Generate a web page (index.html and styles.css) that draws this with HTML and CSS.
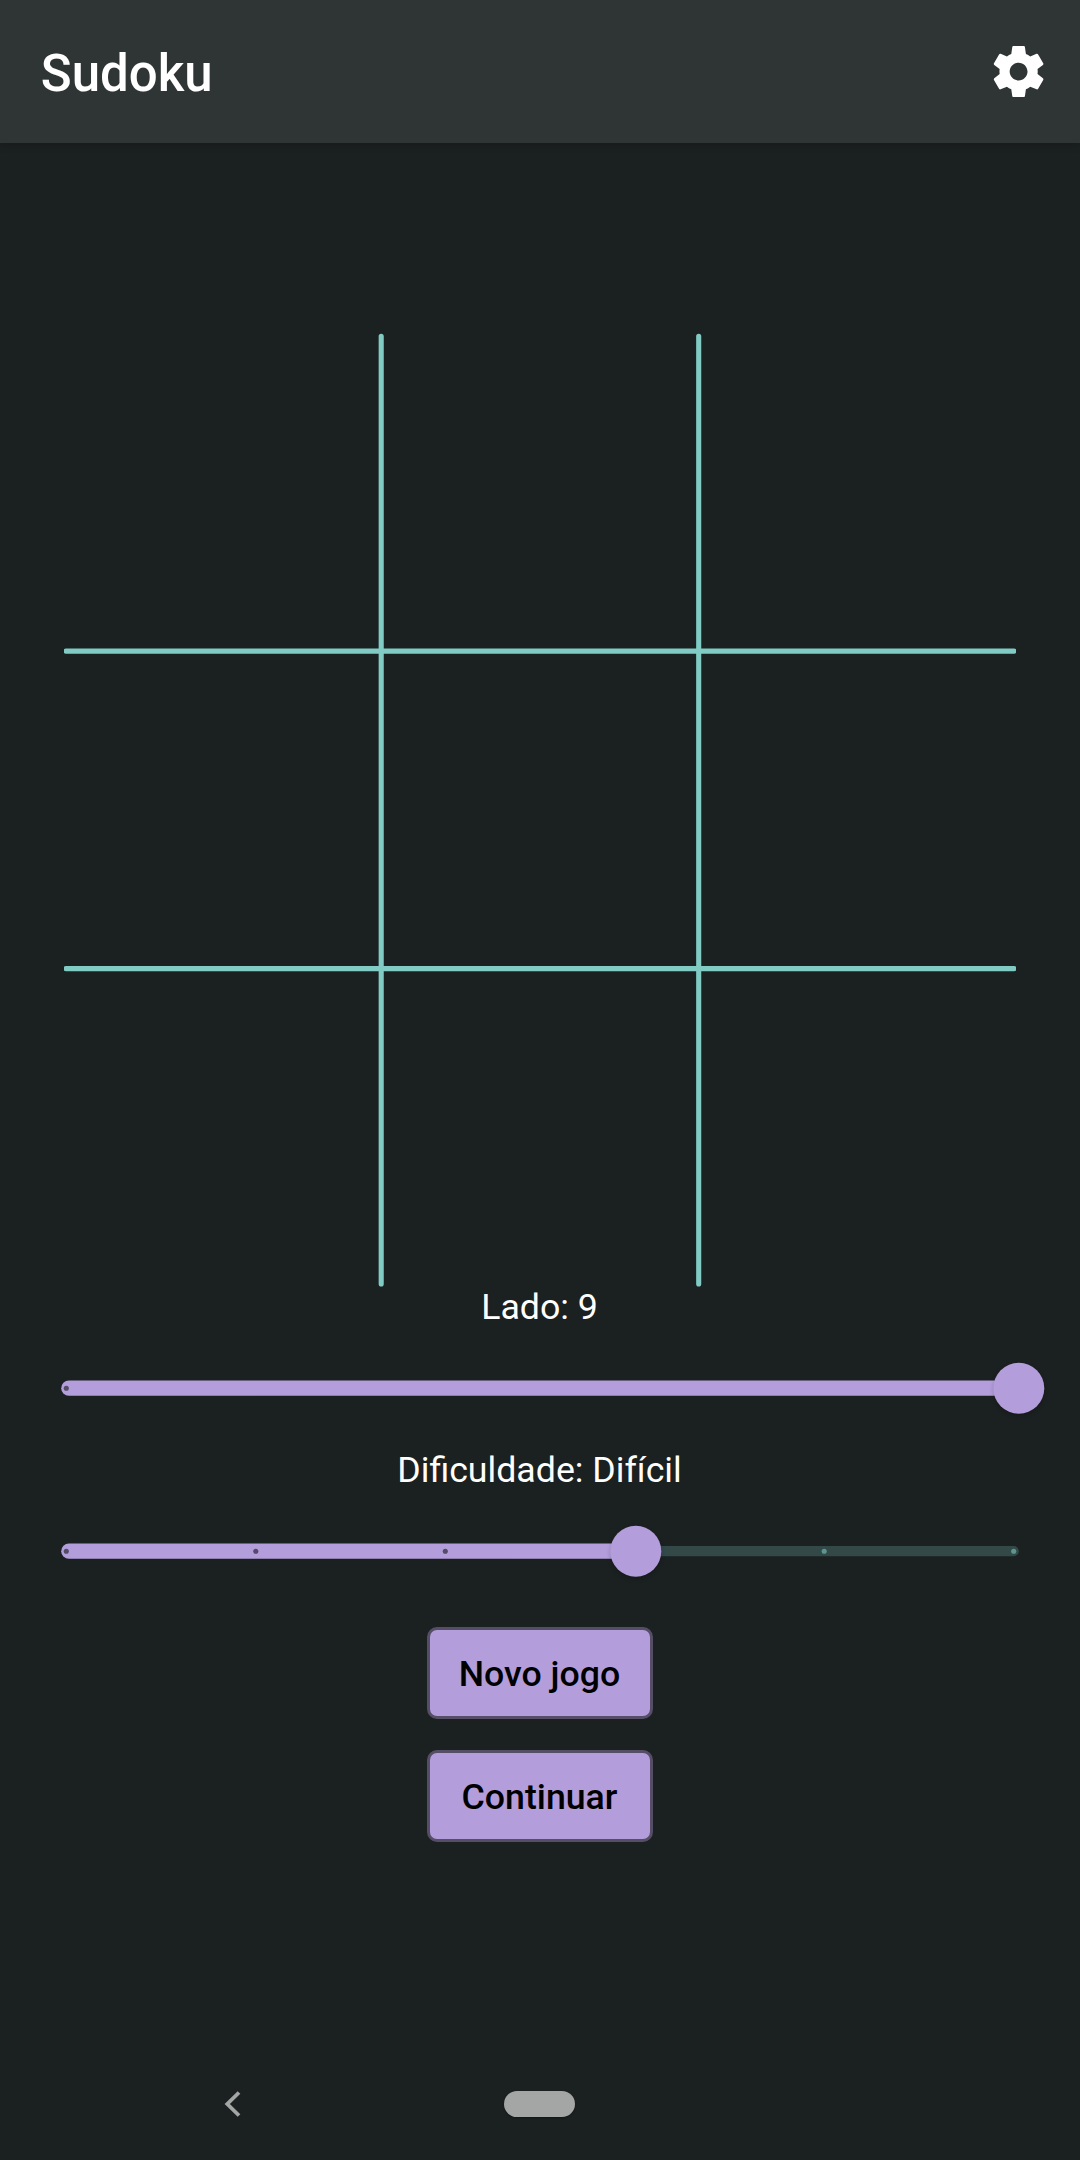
FILE: index.html
```html
<!DOCTYPE html>
<html lang="pt">
<head>
<meta charset="utf-8">
<title>Sudoku</title>
<link rel="stylesheet" href="styles.css">
</head>
<body>
<header class="app-bar">
  <h1 class="title">Sudoku</h1>
  <svg class="gear" viewBox="0 0 24 24" role="img" aria-label="Configurações"><path fill="#fff" d="M19.43 12.98c.04-.32.07-.64.07-.98s-.03-.66-.07-.98l2.11-1.65c.19-.15.24-.42.12-.64l-2-3.46c-.12-.22-.39-.3-.61-.22l-2.49 1c-.52-.4-1.08-.73-1.69-.98l-.38-2.65C14.46 2.18 14.25 2 14 2h-4c-.25 0-.46.18-.49.42l-.38 2.65c-.61.25-1.17.59-1.69.98l-2.49-1c-.23-.09-.49 0-.61.22l-2 3.46c-.13.22-.07.49.12.64l2.11 1.65c-.04.32-.07.65-.07.98s.03.66.07.98l-2.11 1.65c-.19.15-.24.42-.12.64l2 3.46c.12.22.39.3.61.22l2.49-1c.52.4 1.08.73 1.69.98l.38 2.65c.03.24.24.42.49.42h4c.25 0 .46-.18.49-.42l.38-2.65c.61-.25 1.17-.59 1.69-.98l2.49 1c.23.09.49 0 .61-.22l2-3.46c.12-.22.07-.49-.12-.64l-2.11-1.65zM12 15.5c-1.93 0-3.5-1.57-3.5-3.5s1.57-3.5 3.5-3.5 3.5 1.57 3.5 3.5-1.57 3.5-3.5 3.5z"/></svg>
</header>
<main class="content">
  <svg class="board" viewBox="0 0 952 954">
    <path d="M317.2 3.3V951M634.7 3.3V951M2 318.1H950M2 635.6H950"/>
  </svg>
  <p class="label">Lado: 9</p>
  <svg class="slider" viewBox="0 0 1080 122">
    <rect class="active" x="61.2" y="53.5" width="957.6" height="15.3" rx="7.65"/>
    <circle class="tick" cx="66.3" cy="61.2" r="2.55"/>
    <circle class="thumb" cx="1018.8" cy="61.2" r="25.5"/>
  </svg>
  <p class="label">Dificuldade: Difícil</p>
  <svg class="slider" viewBox="0 0 1080 122">
    <rect class="inactive" x="600" y="56.1" width="418.8" height="10.2" rx="5.1"/>
    <rect class="active" x="61.2" y="53.5" width="574.6" height="15.3" rx="7.65"/>
    <circle class="tick" cx="66.3" cy="61.2" r="2.55"/>
    <circle class="tick" cx="255.8" cy="61.2" r="2.55"/>
    <circle class="tick" cx="445.3" cy="61.2" r="2.55"/>
    <circle class="tick-off" cx="824.2" cy="61.2" r="2.55"/>
    <circle class="tick-off" cx="1013.7" cy="61.2" r="2.55"/>
    <circle class="thumb" cx="635.8" cy="61.2" r="25.5"/>
  </svg>
  <div class="actions">
    <button class="button">Novo jogo</button>
    <button class="button">Continuar</button>
  </div>
</main>
<footer class="nav">
  <svg class="back" viewBox="0 0 20 30"><path d="M17 3.5L5.3 15 17 26.5"/></svg>
  <span class="home"></span>
  <span class="spacer"></span>
</footer>
</body>
</html>
```
FILE: styles.css
```css
* { box-sizing: border-box; }
body {
  margin: 0;
  height: 2160px;
  display: flex;
  flex-direction: column;
  background: #1b2020;
  color: #fff;
  font-family: Roboto, sans-serif;
  overflow: hidden;
}
.app-bar {
  height: 143px;
  padding: 0 30.6px 0 40.8px;
  display: flex;
  align-items: center;
  justify-content: space-between;
  background: #2f3535;
  box-shadow: 0 2px 8px rgba(0, 0, 0, .18);
}
.title { margin: 0; font-size: 51px; font-weight: 500; line-height: 60px; padding-top: 4px; }
.gear { width: 61.2px; height: 61.2px; }
.content {
  flex: 1;
  padding-top: 190px;
  display: flex;
  flex-direction: column;
  align-items: center;
}
.board { width: 952px; height: 954px; margin-bottom: -1px; flex: none; }
.board path { fill: none; stroke: #80cbc4; stroke-width: 5.1; stroke-linecap: round; }
.label { margin: 0; padding-right: 1px; height: 41px; line-height: 42px; font-size: 35.7px; }
.slider { width: 1080px; height: 122px; flex: none; }
.active { fill: #b39ddb; }
.inactive { fill: #324947; }
.tick { fill: #544c65; }
.tick-off { fill: #5e9490; }
.thumb { fill: #b39ddb; filter: drop-shadow(0 2px 2px rgba(0, 0, 0, .2)); }
.actions { display: flex; flex-direction: column; gap: 31px; padding-top: 15px; }
.button {
  width: 226px;
  height: 92px;
  padding: 1px 1px 0 0;
  border: 3px solid #564e66;
  border-radius: 10px;
  background: #b39ddb;
  color: #000;
  font: 500 35.7px/42px Roboto, sans-serif;
}
.nav {
  height: 112px;
  display: flex;
  align-items: center;
  justify-content: space-between;
  padding: 0 224px 0 222px;
}
.back { width: 20px; height: 30px; }
.back path { fill: none; stroke: #a4a6a5; stroke-width: 3.8; }
.home { width: 71px; height: 26px; border-radius: 13px; background: #a4a6a5; box-shadow: 0 1px 2px rgba(0, 0, 0, .3); }
.spacer { width: 20px; }
```
